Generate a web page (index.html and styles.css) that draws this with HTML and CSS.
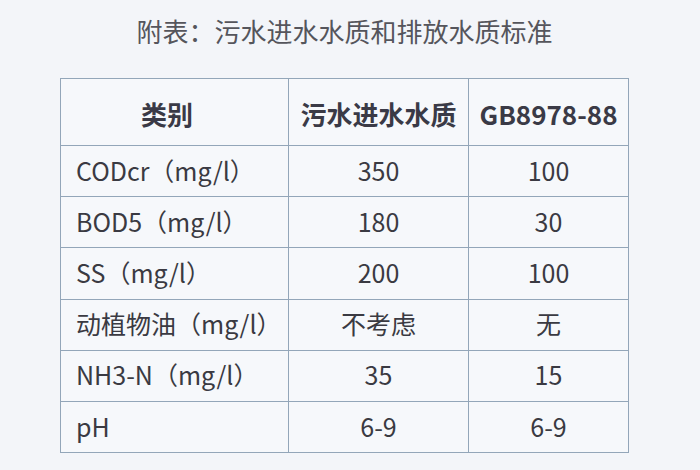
FILE: index.html
```html
<!DOCTYPE html>
<html lang="zh">
<head>
<meta charset="utf-8">
<link rel="stylesheet" href="styles.css">
</head>
<body>
<div class="page">
  <h1 class="title">附表：污水进水水质和排放水质标准</h1>
  <table class="std">
    <colgroup>
      <col class="c1"><col class="c2"><col class="c3">
    </colgroup>
    <thead>
      <tr><th class="first">类别</th><th>污水进水水质</th><th>GB8978-88</th></tr>
    </thead>
    <tbody>
      <tr><td class="first">CODcr（mg/l）</td><td>350</td><td>100</td></tr>
      <tr><td class="first">BOD5（mg/l）</td><td>180</td><td>30</td></tr>
      <tr><td class="first">SS（mg/l）</td><td>200</td><td>100</td></tr>
      <tr><td class="first">动植物油（mg/l）</td><td>不考虑</td><td>无</td></tr>
      <tr><td class="first">NH3-N（mg/l）</td><td>35</td><td>15</td></tr>
      <tr><td class="first">pH</td><td>6-9</td><td>6-9</td></tr>
    </tbody>
  </table>
</div>
</body>
</html>
```
FILE: styles.css
```css
html, body {
  margin: 0;
  padding: 0;
  background: #f3f5f9;
}
body {
  width: 700px;
  height: 470px;
  overflow: hidden;
  font-family: "Noto Sans CJK SC", "Noto Sans", sans-serif;
  color: #3a3a42;
}
.page {
  padding-top: 11px;
}
.title {
  margin: 0;
  padding-right: 11px;
  font-size: 26px;
  font-weight: 400;
  line-height: 40px;
  height: 40px;
  text-align: center;
  color: #55555c;
}
.std {
  margin: 27px 0 0 60px;
  width: 568px;
  border-collapse: collapse;
  table-layout: fixed;
  font-size: 25px;
  background: #f6f8fb;
}
.std col.c1 { width: 228px; }
.std col.c2 { width: 180px; }
.std col.c3 { width: 160px; }
.std th, .std td {
  box-sizing: border-box;
  border: 1.5px solid #93a6b9;
  padding: 0;
  text-align: center;
  line-height: 30px;
  white-space: nowrap;
}
.std th {
  height: 67px;
  font-size: 26px;
  font-weight: 700;
  color: #3a3a46;
  padding-top: 3px;
}
.std td {
  height: 51.2px;
  padding-bottom: 3px;
}
.std th.first {
  padding-right: 15px;
}
.std td.first {
  text-align: left;
  padding-left: 15px;
}
```
